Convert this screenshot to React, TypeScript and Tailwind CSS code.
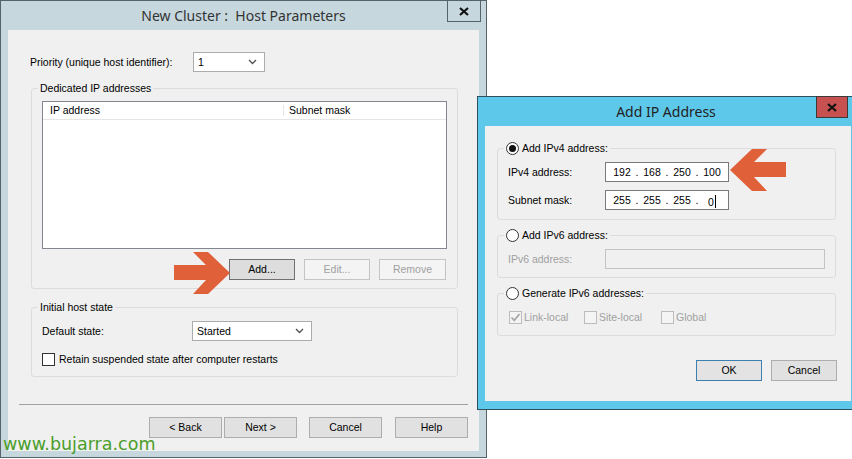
import type { ReactNode } from 'react'

// Two Windows 8 style dialogs: "New Cluster : Host Parameters" with the
// "Add IP Address" dialog laid over it, as on a desktop.

function Chevron() {
  return (
    <svg width="9" height="6" viewBox="0 0 9 6" className="shrink-0">
      <polyline points="1,1 4.5,4.5 8,1" fill="none" stroke="#555" strokeWidth="1.4" />
    </svg>
  )
}

function Select({ value, className }: { value: string; className: string }) {
  return (
    <div
      className={`flex h-[20px] items-center justify-between border border-[#acacac] bg-white pl-[4px] pr-[7px] ${className}`}
    >
      <span>{value}</span>
      <Chevron />
    </div>
  )
}

function Button({
  children,
  className,
  variant = 'normal',
}: {
  children: ReactNode
  className: string
  variant?: 'normal' | 'hot' | 'disabled' | 'default'
}) {
  const look = {
    normal: 'border-[#adadad] bg-[#e1e1e1] text-black',
    hot: 'border-[#707070] bg-[#dddddd] text-black',
    disabled: 'border-[#c4c4c4] bg-[#f4f4f4] text-[#a0a0a0]',
    default: 'border-[#3c7fb1] bg-[#e3e3e3] text-black',
  }[variant]
  return (
    <div className={`flex h-[21px] items-center justify-center border ${look} ${className}`}>{children}</div>
  )
}

function GroupBox({
  legend,
  className,
  children,
}: {
  legend: ReactNode
  className: string
  children?: ReactNode
}) {
  return (
    <div className={`relative rounded-[3px] border border-[#dcdcdc] ${className}`}>
      <div className="absolute left-[6px] top-[-9px] flex h-[16px] items-center bg-[#f0f0f0] px-[2px]">
        {legend}
      </div>
      {children}
    </div>
  )
}

function Radio({ checked }: { checked?: boolean }) {
  return (
    <div className="flex h-[13px] w-[13px] items-center justify-center rounded-full border border-[#333] bg-white">
      {checked && <div className="h-[7px] w-[7px] rounded-full bg-[#111]" />}
    </div>
  )
}

function Checkbox({ checked, disabled }: { checked?: boolean; disabled?: boolean }) {
  return (
    <div
      className={`flex h-[13px] w-[13px] items-center justify-center border ${
        disabled ? 'border-[#bcbcbc] bg-[#f4f4f4]' : 'border-[#333] bg-white'
      }`}
    >
      {checked && (
        <svg width="11" height="11" viewBox="0 0 11 11">
          <polyline points="1.5,5.5 4.2,8.3 9.5,2" fill="none" stroke="#a8a8a8" strokeWidth="1.8" />
        </svg>
      )}
    </div>
  )
}

function CloseGlyph() {
  return (
    <svg width="10" height="9" viewBox="0 0 10 9">
      <path d="M1 1 L9 8 M9 1 L1 8" stroke="#111" strokeWidth="2.2" />
    </svg>
  )
}

function BlockArrow({ dir }: { dir: 'right' | 'left' }) {
  // chevron-headed block arrow, 56 x 42
  return (
    <svg width="56" height="42" viewBox="0 0 56 42" className={dir === 'left' ? 'scale-x-[-1]' : ''}>
      <polygon points="0,13 32,13 19,0 34,0 56,21 34,42 19,42 32,28 0,28" fill="#e0603a" />
    </svg>
  )
}

function IpField({ octets, caret }: { octets: string[]; caret?: boolean }) {
  return (
    <div className="flex h-[20px] w-[124px] items-center border border-[#7a7a7a] bg-white pl-[7px]">
      {octets.map((o, i) => (
        <div key={i} className="flex items-center">
          {i > 0 && <span className="w-[12px] text-center">.</span>}
          <span className="w-[18px] text-center">
            {o}
            {caret && i === octets.length - 1 && (
              <span className="ml-[1px] inline-block h-[13px] w-px translate-y-[2px] bg-black" />
            )}
          </span>
        </div>
      ))}
    </div>
  )
}

function HostParameters() {
  return (
    <div className="absolute left-0 top-0 flex h-[458px] w-[487px] flex-col border border-[#57636c] bg-[#c6d8de]">
      <div className="relative flex h-[29px] shrink-0 items-center justify-center">
        <span className="pt-[1px] font-['Noto_Sans',sans-serif] text-[14px] text-[#333]">
          New Cluster :&nbsp; Host Parameters
        </span>
        <div className="absolute right-[5px] top-[-1px] flex h-[22px] w-[34px] items-center justify-center border border-[#57636c]">
          <CloseGlyph />
        </div>
      </div>

      <div className="mx-[7px] flex h-[421px] flex-col bg-[#f0f0f0]">
        <div className="ml-[22px] mt-[22px] flex h-[20px] items-center">
          <span className="w-[163px]">Priority (unique host identifier):</span>
          <Select value="1" className="w-[72px]" />
        </div>

        <GroupBox
          legend={<span>Dedicated IP addresses</span>}
          className="ml-[23px] mt-[16px] h-[201px] w-[427px] px-[10px] pt-[12px]"
        >
          <div className="flex h-[148px] w-[405px] flex-col border border-[#828790] bg-white">
            <div className="flex h-[18px] items-center border-b border-[#e5e5e5]">
              <span className="w-[241px] border-r border-[#e5e5e5] pl-[7px]">IP address</span>
              <span className="pl-[5px]">Subnet mask</span>
            </div>
          </div>
          <div className="mt-[10px] flex w-[404px] justify-end gap-[9px]">
            <Button variant="hot" className="w-[66px]">Add...</Button>
            <Button variant="disabled" className="w-[66px]">Edit...</Button>
            <Button variant="disabled" className="w-[67px]">Remove</Button>
          </div>
        </GroupBox>

        <GroupBox
          legend={<span>Initial host state</span>}
          className="ml-[23px] mt-[18px] h-[70px] w-[427px] px-[10px] pt-[13px]"
        >
          <div className="flex h-[20px] items-center">
            <span className="w-[150px]">Default state:</span>
            <Select value="Started" className="w-[120px]" />
          </div>
          <div className="mt-[12px] flex items-center gap-[4px]">
            <Checkbox />
            <span>Retain suspended state after computer restarts</span>
          </div>
        </GroupBox>

        <div className="ml-[11px] mt-[27px] h-px w-[449px] bg-[#a0a0a0]" />

        <div className="ml-[141px] mt-[12px] flex">
          <Button className="w-[73px]">&lt; Back</Button>
          <Button className="ml-[2px] w-[73px]">Next &gt;</Button>
          <Button className="ml-[12px] w-[73px]">Cancel</Button>
          <Button className="ml-[13px] w-[73px]">Help</Button>
        </div>
      </div>
    </div>
  )
}

function AddIpAddress() {
  return (
    <div className="absolute left-[477px] top-[96px] flex h-[314px] w-[378px] flex-col border border-[#2e4f5e] bg-[#5ec8ea]">
      <div className="relative flex h-[29px] shrink-0 items-center justify-center">
        <span className="pt-[1px] font-['Noto_Sans',sans-serif] text-[14px] text-[#222]">Add IP Address</span>
        <div className="absolute right-[6px] top-[-1px] flex h-[22px] w-[32px] items-center justify-center border border-[#3a3a3a] bg-[#c75050]">
          <CloseGlyph />
        </div>
      </div>

      <div className="ml-[7px] flex h-[275px] w-[366px] flex-col bg-[#f0f0f0]">
        <GroupBox
          legend={
            <div className="flex items-center gap-[3px]">
              <Radio checked />
              <span>Add IPv4 address:</span>
            </div>
          }
          className="ml-[12px] mt-[22px] h-[72px] w-[339px] px-[10px] pt-[13px]"
        >
          <div className="flex h-[20px] items-center">
            <span className="w-[97px]">IPv4 address:</span>
            <IpField octets={['192', '168', '250', '100']} />
          </div>
          <div className="mt-[8px] flex h-[20px] items-center">
            <span className="w-[97px]">Subnet mask:</span>
            <IpField octets={['255', '255', '255', '0']} caret />
          </div>
        </GroupBox>

        <GroupBox
          legend={
            <div className="flex items-center gap-[3px]">
              <Radio />
              <span>Add IPv6 address:</span>
            </div>
          }
          className="ml-[12px] mt-[15px] h-[43px] w-[339px] px-[10px] pt-[13px]"
        >
          <div className="flex h-[20px] items-center">
            <span className="w-[97px] text-[#a0a0a0]">IPv6 address:</span>
            <div className="h-[20px] w-[221px] border border-[#c4c4c4] bg-[#f0f0f0]" />
          </div>
        </GroupBox>

        <GroupBox
          legend={
            <div className="flex items-center gap-[3px]">
              <Radio />
              <span>Generate IPv6 addresses:</span>
            </div>
          }
          className="ml-[12px] mt-[15px] h-[43px] w-[339px] pl-[11px] pt-[17px]"
        >
          <div className="flex items-center text-[#a0a0a0]">
            <Checkbox checked disabled />
            <span className="ml-[2px] w-[60px]">Link-local</span>
            <Checkbox disabled />
            <span className="ml-[2px] w-[62px]">Site-local</span>
            <Checkbox disabled />
            <span className="ml-[2px]">Global</span>
          </div>
        </GroupBox>

        <div className="ml-[211px] mt-[24px] flex gap-[9px]">
          <Button variant="default" className="w-[66px]">OK</Button>
          <Button className="w-[66px]">Cancel</Button>
        </div>
      </div>
    </div>
  )
}

export default function App() {
  return (
    <div className="relative h-[459px] w-[852px] overflow-hidden bg-white font-['Liberation_Sans',Arial,sans-serif] text-[10.5px] leading-none text-black">
      <HostParameters />
      <AddIpAddress />

      {/* callout arrows pasted over the screenshot */}
      <div className="absolute left-[174px] top-[252px]">
        <BlockArrow dir="right" />
      </div>
      <div className="absolute left-[730px] top-[149px]">
        <BlockArrow dir="left" />
      </div>

      <span className="absolute left-[3px] top-[433px] font-['DejaVu_Sans',sans-serif] text-[17.5px] leading-[22px] text-[#4a9e2a]">
        www.bujarra.com
      </span>
    </div>
  )
}
